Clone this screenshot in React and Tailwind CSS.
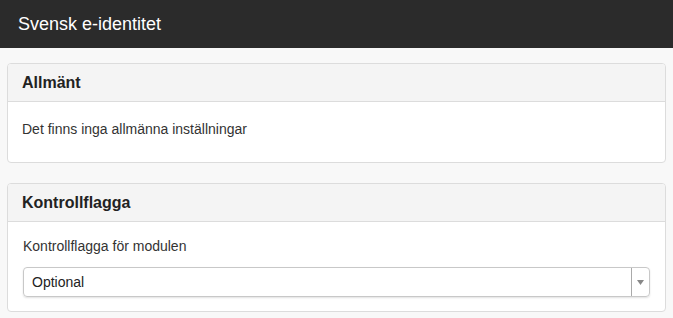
export default function App() {
  const font = { fontFamily: '"Liberation Sans", Arial, sans-serif' };
  return (
    <div className="min-h-[318px] bg-[#f8f8f8] text-[#333]" style={font}>
      <div className="h-[48px] bg-[#2b2b2b] flex items-center px-[18px]">
        <span className="text-white text-[18px]">Svensk e-identitet</span>
      </div>
      <div className="px-[7px] pt-[15px] flex flex-col gap-[20px]">
        <div className="border border-[#dcdcdc] rounded-[4px] bg-white overflow-hidden">
          <div className="h-[38px] bg-[#f4f4f4] border-b border-[#dcdcdc] flex items-center px-[14px]">
            <span className="font-bold text-[16px] text-[#222]">Allmänt</span>
          </div>
          <div className="h-[60px] px-[14px] pt-[17px] text-[14px]">
            Det finns inga allmänna inställningar
          </div>
        </div>
        <div className="border border-[#dcdcdc] rounded-[4px] bg-white overflow-hidden">
          <div className="h-[38px] bg-[#f4f4f4] border-b border-[#dcdcdc] flex items-center px-[14px]">
            <span className="font-bold text-[16px] text-[#222]">Kontrollflagga</span>
          </div>
          <div className="px-[15px] pt-[15px] pb-[14px] text-[14px]">
            <div className="leading-[18px] mb-[12px]">Kontrollflagga för modulen</div>
            <div className="h-[30px] border border-[#c8c8c8] rounded-[4px] shadow-[0_1px_2px_rgba(0,0,0,0.12)] flex items-stretch">
              <div className="flex-1 flex items-center px-[8px] text-[#222]">Optional</div>
              <div className="w-[18px] border-l border-[#aaa] flex items-center justify-center">
                <svg width="7" height="5" viewBox="0 0 7 5"><path d="M0 0 H7 L3.5 5 Z" fill="#888" /></svg>
              </div>
            </div>
          </div>
        </div>
      </div>
    </div>
  );
}
